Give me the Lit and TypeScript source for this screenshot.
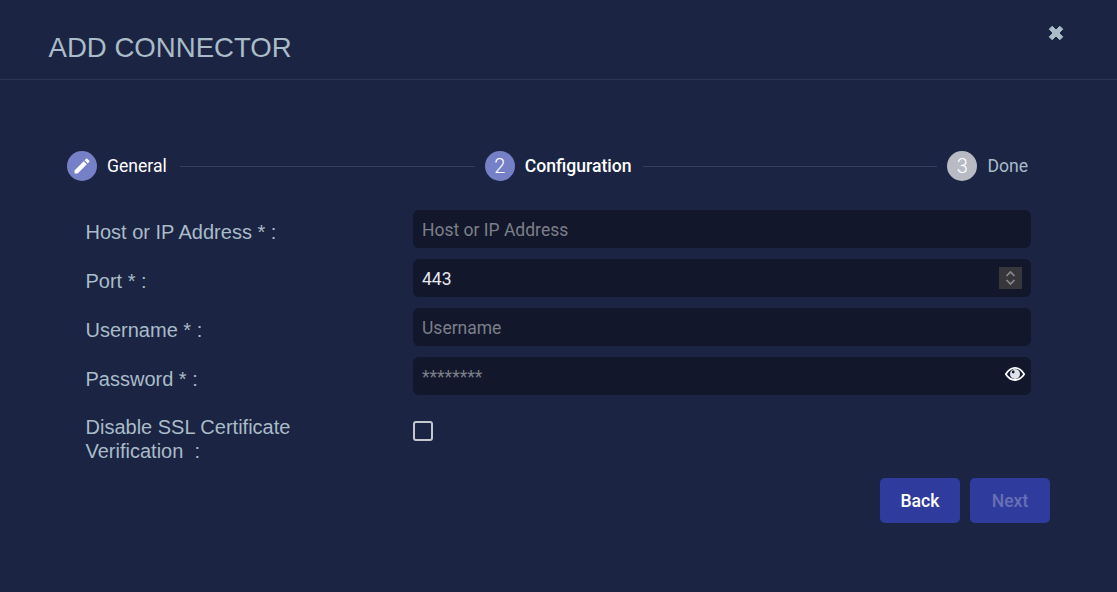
import { LitElement, html, css } from "lit";
import { customElement } from "lit/decorators.js";

@customElement("app-root")
export class AppRoot extends LitElement {
  static styles = css`
    :host { display: block; width: 1117px; height: 592px; background: #1b2443; overflow: hidden; font-family: Roboto, sans-serif; }
    * { box-sizing: border-box; }
    .header { height: 80px; border-bottom: 1px solid #2c3552; padding: 32px 53px 0 48.5px; display: flex; justify-content: space-between; align-items: flex-start; }
    h1 { margin: 0; font: 400 27.6px/32px "Liberation Sans", Arial, sans-serif; color: #a9bcc8; }
    .close { width: 16px; height: 16px; margin-top: -7px; display: block; fill: #a9bcc8; }
    .stepper { display: flex; align-items: center; margin: 71px 0 0 67px; width: 961px; height: 30px; }
    .step { display: flex; align-items: center; gap: 10px; font-size: 17.6px; font-weight: 400; color: #fff; }
    .step.active { font-weight: 500; }
    .step.off { color: #a9bcc8; }
    .dot { width: 30px; height: 30px; border-radius: 50%; background: #7680c6; display: flex; align-items: center; justify-content: center; color: #fff; font-size: 20px; font-weight: 300; }
    .off .dot { background: #b9bbc4; }
    .line { flex: 1; height: 1px; background: #363f5c; margin: 0 10px 0 13px; }
    .line.two { margin: 0 10px 0 11px; }
    form { margin: 29px 0 0 85.5px; width: 945.5px; display: flex; flex-direction: column; gap: 11px; }
    .row { display: grid; grid-template-columns: 327.5px 618px; }
    label { font: 400 20px/24px "Liberation Sans", Arial, sans-serif; color: #a9bcc8; padding-top: 10px; }
    input.text { width: 100%; height: 38px; border: 0; outline: 0; border-radius: 6px; background: #12172b; color: #e6e8ee; font: 400 17.5px Roboto, sans-serif; padding: 1px 9px 0; display: block; appearance: textfield; }
    input.text::placeholder { color: #7c7f88; opacity: 1; }
    input.text::-webkit-inner-spin-button { display: none; }
    .field { position: relative; }
    .spin { position: absolute; left: 586px; top: 8px; width: 23px; height: 22px; background: #36363b; }
    .eye { position: absolute; left: 592px; top: 9px; width: 20px; height: 16px; }
    .check-row { margin-top: -2px; padding-top: 11px; }
    .check-row label { padding-top: 0; max-width: 260px; }
    .box { width: 20px; height: 20px; border: 2px solid #c4c7ce; border-radius: 3px; margin-top: 6px; }
    .actions { display: flex; justify-content: flex-end; gap: 10px; margin: 15px 0 0 0; width: 1050px; }
    button { width: 80px; height: 45px; border: 0; border-radius: 5px; background: #303b9e; color: #fff; font: 500 17.6px Roboto, sans-serif; }
    button[disabled] { color: #6670b4; }
  `;

  render() {
    return html`
      <div class="header">
        <h1>ADD CONNECTOR</h1>
        <svg class="close" viewBox="0 0 16 16"><path d="M1.200 4.200 4.200 1.200 8 5 11.800 1.200 14.800 4.200 11 8 14.800 11.800 11.800 14.800 8 11 4.200 14.800 1.200 11.800 5 8Z" stroke="#a9bcc8" stroke-linejoin="round"/></svg>
      </div>
      <div class="stepper">
        <div class="step">
          <span class="dot"><svg width="20" height="20" viewBox="0 0 24 24" fill="#fff"><path d="M3 17.250V21h3.750L17.810 9.940l-3.750-3.750L3 17.250zM20.710 7.040a1 1 0 0 0 0-1.410l-2.340-2.340a1 1 0 0 0-1.410 0l-1.830 1.830 3.750 3.750 1.830-1.830z"/></svg></span>General
        </div>
        <div class="line"></div>
        <div class="step active"><span class="dot">2</span>Configuration</div>
        <div class="line two"></div>
        <div class="step off"><span class="dot">3</span>Done</div>
      </div>
      <form>
        <div class="row"><label>Host or IP Address * :</label><input class="text" placeholder="Host or IP Address" /></div>
        <div class="row"><label>Port * :</label>
          <div class="field"><input class="text" type="number" value="443" />
            <div class="spin"><svg width="23" height="22" viewBox="0 0 23 22" fill="none" stroke="#8b8b8f" stroke-width="1.600"><path d="M7.500 9 11.500 5l4 4M7.500 13l4 4 4-4"/></svg></div>
          </div>
        </div>
        <div class="row"><label>Username * :</label><input class="text" placeholder="Username" /></div>
        <div class="row"><label>Password * :</label>
          <div class="field"><input class="text" placeholder="********" />
            <svg class="eye" viewBox="0 0 20 16"><path d="M.8 8.200C3.500 3.800 6.500 1.800 10 1.800S16.500 3.800 19.200 8.200c-2.700 4-5.700 5.800-9.200 5.800S3.500 12.200.8 8.200Z" fill="#12172b" stroke="#fff" stroke-width="1.800"/><circle cx="10" cy="8" r="5" fill="#dfe2ea"/><circle cx="8.200" cy="6" r="1.400" fill="#12172b"/></svg>
          </div>
        </div>
        <div class="row check-row"><label>Disable SSL Certificate Verification&nbsp; :</label><div><div class="box"></div></div></div>
      </form>
      <div class="actions"><button>Back</button><button disabled>Next</button></div>
    `;
  }
}
